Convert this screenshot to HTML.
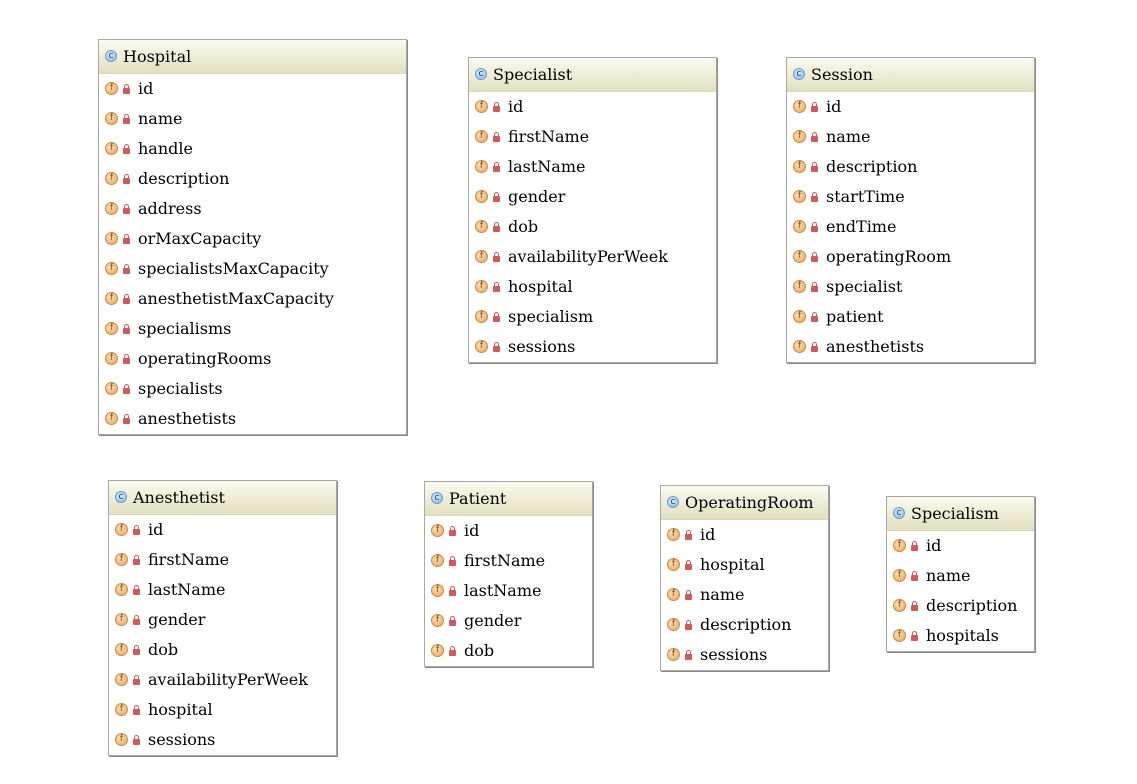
<!DOCTYPE html>
<html><head><style>
body{margin:0;width:1137px;height:784px;background:#fff;position:relative;overflow:hidden;font-family:"DejaVu Serif","Liberation Serif",serif;}
.b{position:absolute;border:1px solid #a8a8a8;background:#fff;box-shadow:1px 1px 0 #8a8a8a;}
.h{height:33px;border-bottom:1px solid #d6d6b8;background:linear-gradient(#fbfbf0,#e2e0c0);position:relative;font-size:16px;line-height:33px;padding-left:24px;color:#000;}
.h:before{content:"c";position:absolute;left:6px;top:10px;width:12px;height:12px;border-radius:50%;background:radial-gradient(circle at 40% 35%,#d8ecff,#7fb7e8);border:1px solid #6a9ed0;box-sizing:border-box;font:9px/10px "DejaVu Sans",sans-serif;text-align:center;color:#234;}
.r{height:30px;line-height:30px;font-size:16px;position:relative;padding-left:39px;white-space:nowrap;}
.r:before{content:"f";position:absolute;left:6px;top:8px;width:13px;height:13px;border-radius:50%;background:radial-gradient(circle at 40% 35%,#fde1b0,#e9a25c);border:1px solid #c98a4a;box-sizing:border-box;font:9px/11px "DejaVu Sans",sans-serif;text-align:center;color:#7a4a18;}
.r:after{content:"";position:absolute;left:24px;top:14px;width:7px;height:6px;background:#d05a5a;border-radius:1px;}
.r i{position:absolute;left:25px;top:10px;width:3px;height:4px;border:1px solid #d05a5a;border-bottom:none;border-radius:3px 3px 0 0;}
</style></head><body>
<div class="b" style="left:98px;top:39px;width:307px;height:394px"><div class="h">Hospital</div>
<div class="r"><i></i>id</div><div class="r"><i></i>name</div><div class="r"><i></i>handle</div><div class="r"><i></i>description</div><div class="r"><i></i>address</div><div class="r"><i></i>orMaxCapacity</div><div class="r"><i></i>specialistsMaxCapacity</div><div class="r"><i></i>anesthetistMaxCapacity</div><div class="r"><i></i>specialisms</div><div class="r"><i></i>operatingRooms</div><div class="r"><i></i>specialists</div><div class="r"><i></i>anesthetists</div></div>
<div class="b" style="left:468px;top:57px;width:247px;height:304px"><div class="h">Specialist</div>
<div class="r"><i></i>id</div><div class="r"><i></i>firstName</div><div class="r"><i></i>lastName</div><div class="r"><i></i>gender</div><div class="r"><i></i>dob</div><div class="r"><i></i>availabilityPerWeek</div><div class="r"><i></i>hospital</div><div class="r"><i></i>specialism</div><div class="r"><i></i>sessions</div></div>
<div class="b" style="left:786px;top:57px;width:247px;height:304px"><div class="h">Session</div>
<div class="r"><i></i>id</div><div class="r"><i></i>name</div><div class="r"><i></i>description</div><div class="r"><i></i>startTime</div><div class="r"><i></i>endTime</div><div class="r"><i></i>operatingRoom</div><div class="r"><i></i>specialist</div><div class="r"><i></i>patient</div><div class="r"><i></i>anesthetists</div></div>
<div class="b" style="left:108px;top:480px;width:227px;height:274px"><div class="h">Anesthetist</div>
<div class="r"><i></i>id</div><div class="r"><i></i>firstName</div><div class="r"><i></i>lastName</div><div class="r"><i></i>gender</div><div class="r"><i></i>dob</div><div class="r"><i></i>availabilityPerWeek</div><div class="r"><i></i>hospital</div><div class="r"><i></i>sessions</div></div>
<div class="b" style="left:424px;top:481px;width:167px;height:184px"><div class="h">Patient</div>
<div class="r"><i></i>id</div><div class="r"><i></i>firstName</div><div class="r"><i></i>lastName</div><div class="r"><i></i>gender</div><div class="r"><i></i>dob</div></div>
<div class="b" style="left:660px;top:485px;width:167px;height:184px"><div class="h">OperatingRoom</div>
<div class="r"><i></i>id</div><div class="r"><i></i>hospital</div><div class="r"><i></i>name</div><div class="r"><i></i>description</div><div class="r"><i></i>sessions</div></div>
<div class="b" style="left:886px;top:496px;width:147px;height:154px"><div class="h">Specialism</div>
<div class="r"><i></i>id</div><div class="r"><i></i>name</div><div class="r"><i></i>description</div><div class="r"><i></i>hospitals</div></div>
</body></html>
